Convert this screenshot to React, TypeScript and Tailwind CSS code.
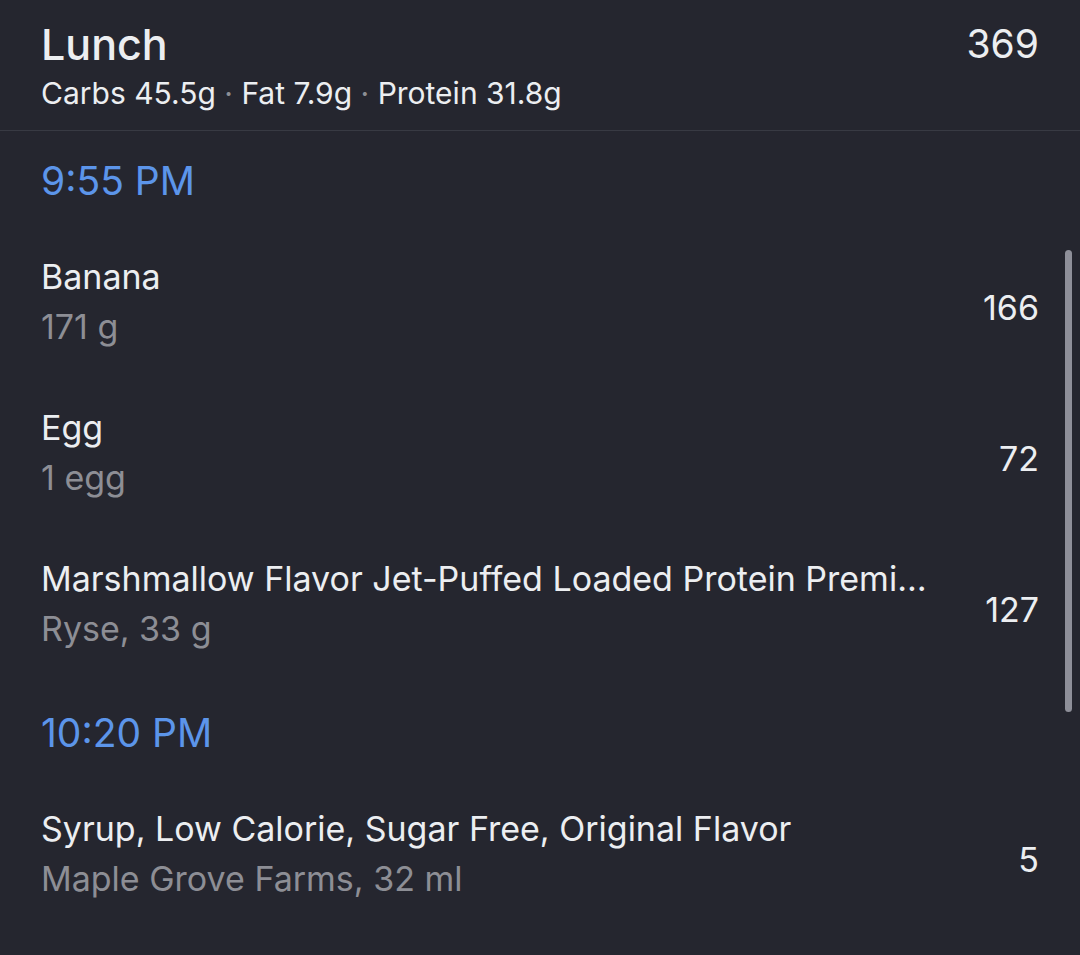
import React from "react";

interface Entry {
    name: string;
    detail: string;
    calories: number;
}

interface Group {
    time: string;
    entries: Entry[];
}

const groups: Group[] = [
    {
        time: "9:55 PM",
        entries: [
            { name: "Banana", detail: "171 g", calories: 166 },
            { name: "Egg", detail: "1 egg", calories: 72 },
            {
                name: "Marshmallow Flavor Jet-Puffed Loaded Protein Premium Whey Protein",
                detail: "Ryse, 33 g",
                calories: 127,
            },
        ],
    },
    {
        time: "10:20 PM",
        entries: [
            {
                name: "Syrup, Low Calorie, Sugar Free, Original Flavor",
                detail: "Maple Grove Farms, 32 ml",
                calories: 5,
            },
        ],
    },
];

const EntryRow = ({ entry }: { entry: Entry }) => (
    <div className="flex h-[151px] items-center justify-between gap-[48px]">
        <div className="min-w-0 flex-1 pb-[8px]">
            <div className="truncate text-[34px] leading-[50px] text-[#eceef1]">{entry.name}</div>
            <div className="truncate text-[34px] leading-[50px] text-[#8d8e95]">{entry.detail}</div>
        </div>
        <div className="pt-[4px] text-[34px] leading-[50px] text-[#eceef1]">{entry.calories}</div>
    </div>
);

const App = () => {
    return (
        <div
            className="relative h-[955px] w-[1080px] overflow-hidden bg-[#25262f]"
            style={{ fontFamily: "Inter, 'Noto Sans', sans-serif" }}
        >
            <div className="flex h-[131px] justify-between border-b border-[#383a43] px-[41px] pt-[15px]">
                <div>
                    <div className="text-[43px] font-medium leading-[58px] text-[#eceef1]">Lunch</div>
                    <div className="text-[30px] leading-[40px] text-[#eceef1]">
                        Carbs 45.5g <span className="text-[#8d8e95]">·</span> Fat 7.9g{" "}
                        <span className="text-[#8d8e95]">·</span> Protein 31.8g
                    </div>
                </div>
                <div className="text-[39px] leading-[58px] text-[#eceef1]">369</div>
            </div>

            <div className="px-[41px]">
                {groups.map((group) => (
                    <div key={group.time}>
                        <div className="flex h-[99px] items-center pt-[2px] text-[39px] text-[#5c95ea]">
                            {group.time}
                        </div>
                        {group.entries.map((entry) => (
                            <EntryRow key={entry.name} entry={entry} />
                        ))}
                    </div>
                ))}
            </div>

            {/* scroll indicator */}
            <div className="absolute right-[8px] top-[250px] h-[462px] w-[7px] rounded-full bg-[#8e8f99]" />
        </div>
    );
};

export default App;
